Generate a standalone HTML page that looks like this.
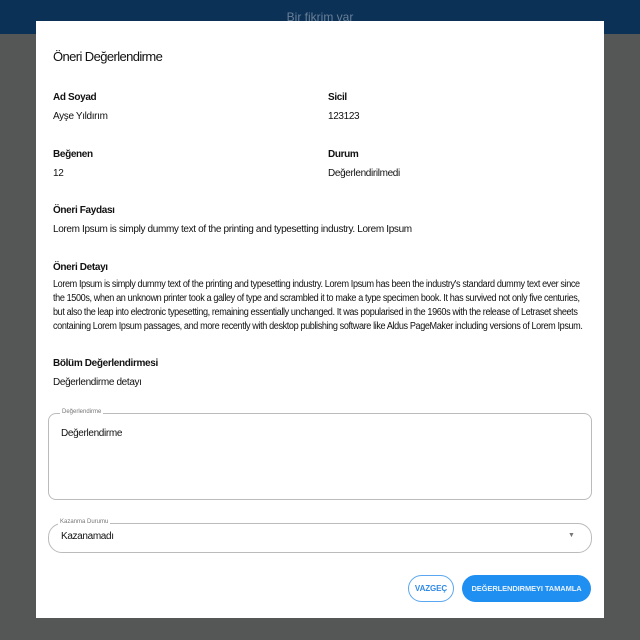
<!DOCTYPE html>
<html><head><meta charset="utf-8"><style>
body{margin:0;width:640px;height:640px;background:#555656;position:relative;overflow:hidden;font-family:"Liberation Sans",sans-serif;color:#111;}
.top{position:absolute;left:0;top:0;width:640px;height:34px;background:#0b3157;}
.top span{position:absolute;left:0;width:640px;top:10px;text-align:center;color:#6a7f96;font-size:12px;}
.dlg{position:absolute;left:36px;top:21px;width:568px;height:597px;background:#fff;}
.t{position:absolute;white-space:nowrap;font-size:10px;letter-spacing:-0.35px;}
.b{font-weight:bold;}
.p{position:absolute;left:17px;font-size:10px;letter-spacing:-0.42px;line-height:14px;white-space:nowrap;transform:scaleX(0.909);transform-origin:0 0;}
.box{position:absolute;border:1px solid #bbb;border-radius:8px;}
.lbl{position:absolute;font-size:6px;color:#777;background:#fff;padding:0 2px;white-space:nowrap;}
.btn{position:absolute;border-radius:14px;font-size:8px;font-weight:bold;text-align:center;letter-spacing:-0.1px;white-space:nowrap;}
</style></head><body>
<div class="top"><span>Bir fikrim var</span></div>
<div class="dlg">
<div class="t" style="left:17px;top:28px;font-size:13px;letter-spacing:-0.6px">Öneri Değerlendirme</div>
<div class="t b" style="left:17px;top:71px">Ad Soyad</div>
<div class="t" style="left:17px;top:90px">Ayşe Yıldırım</div>
<div class="t b" style="left:292px;top:71px">Sicil</div>
<div class="t" style="left:292px;top:90px">123123</div>
<div class="t b" style="left:17px;top:128px">Beğenen</div>
<div class="t" style="left:17px;top:147px">12</div>
<div class="t b" style="left:292px;top:128px">Durum</div>
<div class="t" style="left:292px;top:147px">Değerlendirilmedi</div>
<div class="t b" style="left:17px;top:184px">Öneri Faydası</div>
<div class="t" style="left:17px;top:203px">Lorem Ipsum is simply dummy text of the printing and typesetting industry. Lorem Ipsum</div>
<div class="t b" style="left:17px;top:241px">Öneri Detayı</div>
<div class="p" style="top:257px">Lorem Ipsum is simply dummy text of the printing and typesetting industry. Lorem Ipsum has been the industry's standard dummy text ever since<br>the 1500s, when an unknown printer took a galley of type and scrambled it to make a type specimen book. It has survived not only five centuries,<br>but also the leap into electronic typesetting, remaining essentially unchanged. It was popularised in the 1960s with the release of Letraset sheets<br>containing Lorem Ipsum passages, and more recently with desktop publishing software like Aldus PageMaker including versions of Lorem Ipsum.</div>
<div class="t b" style="left:17px;top:337px">Bölüm Değerlendirmesi</div>
<div class="t" style="left:17px;top:356px">Değerlendirme detayı</div>
<div class="box" style="left:12px;top:392px;width:542px;height:85px"></div>
<div class="lbl" style="left:24px;top:388px">Değerlendirme</div>
<div class="t" style="left:25px;top:407px">Değerlendirme</div>
<div class="box" style="left:12px;top:502px;width:542px;height:28px;border-radius:14px"></div>
<div class="lbl" style="left:22px;top:498px">Kazanma Durumu</div>
<div class="t" style="left:25px;top:510px">Kazanamadı</div>
<div class="t" style="left:532px;top:511px;font-size:7px;color:#777">▼</div>
<div class="btn" style="left:372px;top:554px;width:44px;height:25px;line-height:25px;border:1px solid #5aa6f0;color:#2f8ae8;">VAZGEÇ</div>
<div class="btn" style="left:426px;top:554px;width:129px;height:27px;line-height:27px;background:#1f8ff2;color:#e8f2ff;font-size:7.5px;">DEĞERLENDIRMEYI TAMAMLA</div>
</div>
</body></html>
